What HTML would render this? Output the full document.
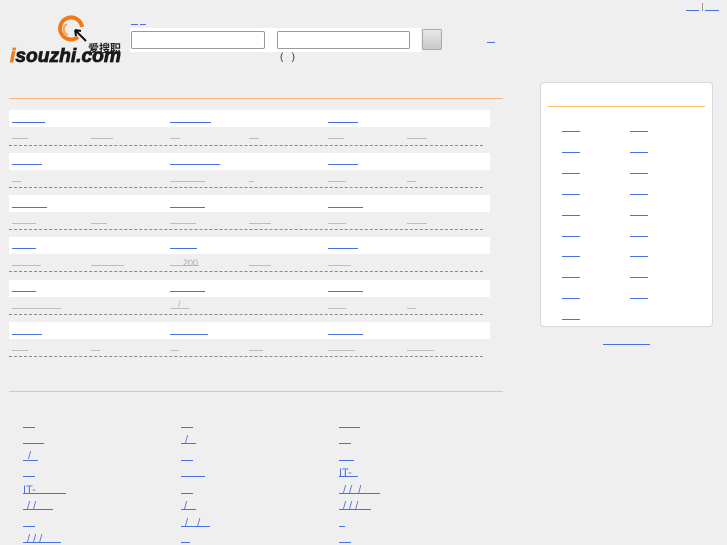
<!DOCTYPE html>
<html><head><meta charset="utf-8"><style>
*{margin:0;padding:0;box-sizing:border-box}
body{width:727px;height:545px;background:#efefef;position:relative;overflow:hidden;font-family:"Liberation Sans","Noto Sans CJK SC",sans-serif;font-size:11px}
.a{position:absolute;height:1px;background:#4a6fe0}
.g{position:absolute;height:1px;background:#bdbdbd}
.d{position:absolute;left:9px;width:474px;border-top:1px dashed #8a8a8a;height:0}
.bar{position:absolute;left:9px;width:481px;height:17px;background:#fff}
.t{position:absolute;color:#4a6fe0;font-size:11px;line-height:11px}
</style></head><body>
<!-- logo -->
<svg style="position:absolute;left:0;top:0" width="130" height="70">
<path d="M78 37 A11 11 0 1 1 82 27" fill="none" stroke="#f07a1a" stroke-width="4"/>
<path d="M67 24 A6 6 0 0 0 68 35" fill="none" stroke="#f7a54a" stroke-width="2"/>
<path d="M75 30 L86 41 M75 30 L76 36 M75 30 L81 31" stroke="#111" stroke-width="2" fill="none"/>
<text x="88" y="52" font-family="Noto Sans CJK SC,sans-serif" font-size="11" font-weight="bold" fill="#222" textLength="33" lengthAdjust="spacingAndGlyphs">爱搜职</text>
<text x="10" y="62" font-family="Liberation Sans,sans-serif" font-size="19" font-style="italic" font-weight="bold" fill="#1a1a1a" stroke="#1a1a1a" stroke-width="0.8" textLength="111" lengthAdjust="spacingAndGlyphs"><tspan fill="#f07a1a" stroke="#f07a1a">i</tspan>souzhi.com</text>
</svg>
<!-- top right -->
<div class="a" style="left:686px;top:10px;width:13px"></div>
<div style="position:absolute;left:702px;top:3px;width:1px;height:8px;background:#999"></div>
<div class="a" style="left:705px;top:10px;width:14px"></div>
<!-- search -->
<div class="a" style="left:131px;top:24px;width:7px"></div>
<div class="a" style="left:140px;top:24px;width:6px"></div>
<div style="position:absolute;left:130px;top:28px;width:291px;height:24px;background:#fff"></div>
<div style="position:absolute;left:131px;top:31px;width:134px;height:18px;border:1px solid #999;border-radius:2px;background:#fff"></div>
<div style="position:absolute;left:277px;top:31px;width:133px;height:18px;border:1px solid #999;border-radius:2px;background:#fff"></div>
<div style="position:absolute;left:422px;top:29px;width:20px;height:21px;border:1px solid #aaa;border-radius:2px;background:linear-gradient(#e8e8e8,#c8c8c8)"></div>
<div style="position:absolute;left:280px;top:52px;font-size:10px;color:#333">(&nbsp;&nbsp;&nbsp;)</div>
<div class="a" style="left:487px;top:42px;width:8px"></div>
<!-- orange lines -->
<div style="position:absolute;left:9px;top:98px;width:494px;height:1px;background:#f8b47a"></div>
<div style="position:absolute;left:9px;top:391px;width:494px;height:1px;background:#e8c4a4"></div>
<!-- rows -->
<div class="bar" style="top:110px"></div><div class="bar" style="top:153px"></div><div class="bar" style="top:195px"></div>
<div class="bar" style="top:237px"></div><div class="bar" style="top:280px"></div><div class="bar" style="top:322px"></div>
<div class="d" style="top:145px"></div><div class="d" style="top:187px"></div><div class="d" style="top:229px"></div>
<div class="d" style="top:271px"></div><div class="d" style="top:314px"></div><div class="d" style="top:356px"></div>
<div class="a" style="left:12px;top:122px;width:33px"></div><div class="a" style="left:170px;top:122px;width:41px"></div><div class="a" style="left:328px;top:122px;width:30px"></div>
<div class="g" style="left:12px;top:138px;width:16px"></div><div class="g" style="left:91px;top:138px;width:22px"></div><div class="g" style="left:170px;top:138px;width:10px"></div><div class="g" style="left:249px;top:138px;width:10px"></div><div class="g" style="left:328px;top:138px;width:16px"></div><div class="g" style="left:407px;top:138px;width:20px"></div>
<div class="a" style="left:12px;top:164px;width:30px"></div><div class="a" style="left:170px;top:164px;width:50px"></div><div class="a" style="left:328px;top:164px;width:30px"></div>
<div class="g" style="left:12px;top:181px;width:9px"></div><div class="g" style="left:170px;top:181px;width:35px"></div><div class="g" style="left:249px;top:181px;width:5px"></div><div class="g" style="left:328px;top:181px;width:18px"></div><div class="g" style="left:407px;top:181px;width:9px"></div>
<div class="a" style="left:12px;top:207px;width:35px"></div><div class="a" style="left:170px;top:207px;width:35px"></div><div class="a" style="left:328px;top:207px;width:35px"></div>
<div class="g" style="left:12px;top:223px;width:24px"></div><div class="g" style="left:91px;top:223px;width:16px"></div><div class="g" style="left:170px;top:223px;width:26px"></div><div class="g" style="left:249px;top:223px;width:22px"></div><div class="g" style="left:328px;top:223px;width:18px"></div><div class="g" style="left:407px;top:223px;width:20px"></div>
<div class="a" style="left:12px;top:248px;width:24px"></div><div class="a" style="left:170px;top:248px;width:27px"></div><div class="a" style="left:328px;top:248px;width:30px"></div>
<div class="g" style="left:12px;top:265px;width:29px"></div><div class="g" style="left:91px;top:265px;width:33px"></div><div class="g" style="left:170px;top:265px;width:29px"></div><div class="g" style="left:249px;top:265px;width:22px"></div><div class="g" style="left:328px;top:265px;width:23px"></div>
<div style="position:absolute;left:183px;top:258px;font-size:9px;color:#aaa">200</div>
<div class="a" style="left:12px;top:291px;width:24px"></div><div class="a" style="left:170px;top:291px;width:35px"></div><div class="a" style="left:328px;top:291px;width:35px"></div>
<div class="g" style="left:12px;top:308px;width:49px"></div><div class="g" style="left:170px;top:308px;width:20px"></div><div class="g" style="left:328px;top:308px;width:18px"></div><div class="g" style="left:407px;top:308px;width:9px"></div>
<div style="position:absolute;left:178px;top:299px;font-size:9px;color:#aaa">/</div>
<div class="a" style="left:12px;top:334px;width:30px"></div><div class="a" style="left:170px;top:334px;width:38px"></div><div class="a" style="left:328px;top:334px;width:35px"></div>
<div class="g" style="left:12px;top:350px;width:16px"></div><div class="g" style="left:91px;top:350px;width:9px"></div><div class="g" style="left:170px;top:350px;width:9px"></div><div class="g" style="left:249px;top:350px;width:14px"></div><div class="g" style="left:328px;top:350px;width:27px"></div><div class="g" style="left:407px;top:350px;width:27px"></div>
<!-- right panel -->
<div style="position:absolute;left:540px;top:82px;width:173px;height:245px;background:#fff;border:1px solid #d8d8d8;border-radius:4px"></div>
<div style="position:absolute;left:548px;top:106px;width:157px;height:1px;background:#fbbf6e"></div>
<div class="a" style="left:562px;top:131px;width:18px"></div><div class="a" style="left:630px;top:131px;width:18px"></div>
<div class="a" style="left:562px;top:152px;width:18px"></div><div class="a" style="left:630px;top:152px;width:18px"></div>
<div class="a" style="left:562px;top:173px;width:18px"></div><div class="a" style="left:630px;top:173px;width:18px"></div>
<div class="a" style="left:562px;top:194px;width:18px"></div><div class="a" style="left:630px;top:194px;width:18px"></div>
<div class="a" style="left:562px;top:215px;width:18px"></div><div class="a" style="left:630px;top:215px;width:18px"></div>
<div class="a" style="left:562px;top:236px;width:18px"></div><div class="a" style="left:630px;top:236px;width:18px"></div>
<div class="a" style="left:562px;top:256px;width:18px"></div><div class="a" style="left:630px;top:256px;width:18px"></div>
<div class="a" style="left:562px;top:277px;width:18px"></div><div class="a" style="left:630px;top:277px;width:18px"></div>
<div class="a" style="left:562px;top:298px;width:18px"></div><div class="a" style="left:630px;top:298px;width:18px"></div>
<div class="a" style="left:562px;top:319px;width:18px"></div>
<div class="a" style="left:603px;top:344px;width:47px"></div>
<!-- bottom links -->
<div class="a" style="left:23px;top:427px;width:12px"></div><div class="a" style="left:181px;top:427px;width:12px"></div><div class="a" style="left:339px;top:427px;width:21px"></div>
<div class="a" style="left:23px;top:443px;width:21px"></div><div class="a" style="left:181px;top:443px;width:15px"></div><div class="a" style="left:339px;top:443px;width:12px"></div>
<div class="a" style="left:23px;top:460px;width:15px"></div><div class="a" style="left:181px;top:460px;width:12px"></div><div class="a" style="left:339px;top:460px;width:15px"></div>
<div class="a" style="left:23px;top:476px;width:12px"></div><div class="a" style="left:181px;top:476px;width:24px"></div><div class="a" style="left:339px;top:476px;width:19px"></div>
<div class="a" style="left:23px;top:493px;width:43px"></div><div class="a" style="left:181px;top:493px;width:12px"></div><div class="a" style="left:339px;top:493px;width:41px"></div>
<div class="a" style="left:23px;top:509px;width:30px"></div><div class="a" style="left:181px;top:509px;width:15px"></div><div class="a" style="left:339px;top:509px;width:32px"></div>
<div class="a" style="left:23px;top:526px;width:12px"></div><div class="a" style="left:181px;top:526px;width:29px"></div><div class="a" style="left:339px;top:526px;width:6px"></div>
<div class="a" style="left:23px;top:542px;width:38px"></div><div class="a" style="left:181px;top:542px;width:9px"></div><div class="a" style="left:339px;top:542px;width:12px"></div>
<div class="t" style="left:23px;top:485px">IT-</div><div class="t" style="left:339px;top:468px">IT-</div>
<div class="t" style="left:28px;top:451px">/</div><div class="t" style="left:185px;top:435px">/</div>
<div class="t" style="left:27px;top:501px">/ /</div><div class="t" style="left:184px;top:501px">/</div>
<div class="t" style="left:343px;top:485px">/ / &nbsp;/</div><div class="t" style="left:343px;top:501px">/ / /</div>
<div class="t" style="left:185px;top:518px">/ &nbsp;&nbsp;/</div><div class="t" style="left:27px;top:534px">/ / /</div>
</body></html>
